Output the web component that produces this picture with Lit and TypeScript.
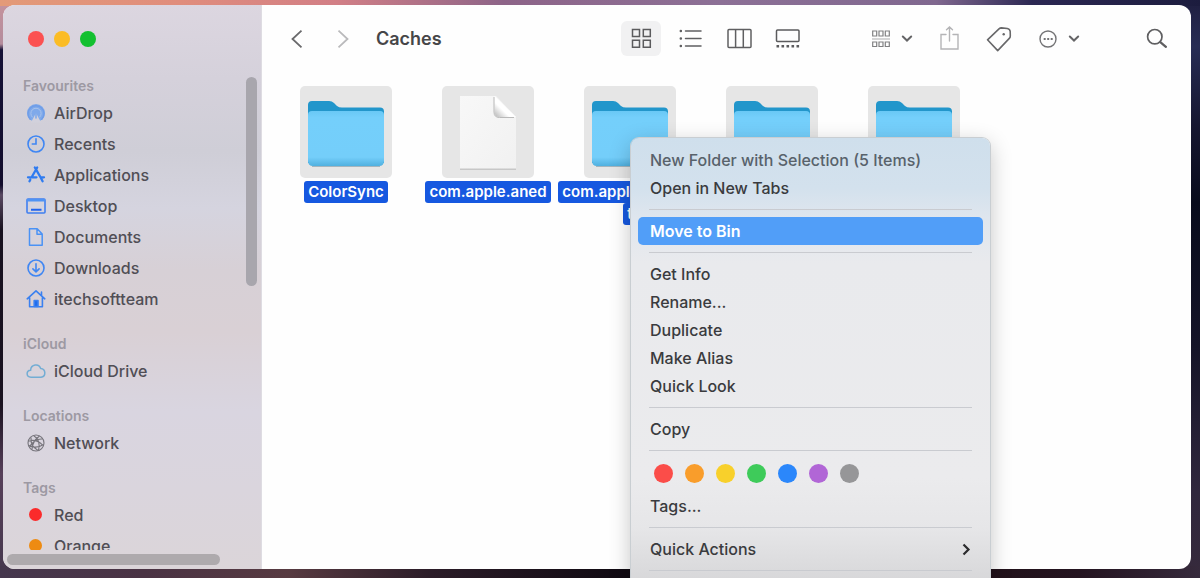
import { LitElement, html, css, svg, nothing } from "lit";
import { customElement, property } from "lit/decorators.js";

const icons: Record<string, unknown> = {
  airdrop: svg`<g fill="none" stroke="#6b9dea" stroke-linecap="round"><circle cx="10" cy="10" r="9" fill="#7fa9ea" stroke="none"/><path d="M4.2 16.2a8 8 0 1 1 11.6 0" stroke="#6f9de8" stroke-width="1.4"/><path d="M6.2 14a5.2 5.2 0 1 1 7.600 0" stroke="#a9c3ec" stroke-width="1"/><path d="M10 10 5 19.500h10z" fill="#d2d1dc" stroke="none"/><path d="M10 10v5" stroke="#7fa9ea" stroke-width="1.600"/></g>`,
  recents: svg`<g fill="none" stroke="#3f86f3" stroke-width="1.6" stroke-linecap="round"><circle cx="10" cy="10" r="8"/><path d="M10 4.800V10H6.300"/></g>`,
  apps: svg`<g fill="none" stroke="#2f7bf0" stroke-width="2.300" stroke-linecap="round"><path d="M8.800 2.500 10 4.400 14.500 12.200 16.600 16.300M11.200 2.500 5.600 12.300M4.300 14.800 3.500 16.300M2 12.300h8.500M14.500 12.300H18"/></g>`,
  desktop: svg`<g fill="none" stroke="#3f7ff0" stroke-width="1.600"><rect x="1" y="3" width="18" height="14" rx="1"/><path d="M1 4.200h18" stroke="#4f93f4" stroke-width="2.600"/><path d="M5 13.700h10.500" stroke="#1f63ee" stroke-width="2"/></g>`,
  document: svg`<g fill="none" stroke="#4a92f5" stroke-width="1.500" stroke-linejoin="round"><path d="M3.500 1.800h7.700l5 5.200v11.200H3.500zM11 2v5.200h5"/></g>`,
  downloads: svg`<g fill="none" stroke="#3f86f3" stroke-width="1.600" stroke-linecap="round" stroke-linejoin="round"><circle cx="10" cy="10" r="8"/><path d="M10 5.700v8M6.900 10.900 10 13.900l3.100-3"/></g>`,
  home: svg`<g fill="none" stroke="#3a80f0" stroke-width="1.600" stroke-linecap="round" stroke-linejoin="round"><path d="M1.200 9.800 10 1.800l8.800 8M15.500 6.500V3M3.600 8.500v9.300h12.800V8.500"/><path d="M8.200 17.500v-6h3.800v6z" fill="#1f6cee"/></g>`,
  cloud: svg`<path d="M5 16.200c-5.200-.2-5-6.700-.4-7 .4-6 8.200-7.200 10.100-1.800 5.300.4 5.600 8.500.3 8.800z" fill="none" stroke="#73add4" stroke-width="1.500"/>`,
  network: svg`<g fill="none" stroke="#76747b" stroke-width="1.100"><circle cx="10" cy="10" r="8"/><path d="M2.500 8c5-1.500 10-.5 14.500 4.500M7.500 2.500c5 3 6.500 9 5 15M3.500 14.500c2-5 7-9 13-8.500M5 4.500c-.5 5 2 10 7 13M13.500 3c-4 3-7.500 8-7.500 13.500M3 12.500c5 2.500 10 2 14.500-1"/></g>`,
  grid: svg`<g fill="none" stroke="#5b5b5d" stroke-width="1.500"><path d="M1.500 1.500h7v7h-7zM12.300 1.500h7v7h-7zM1.500 12.300h7v7h-7zM12.300 12.300h7v7h-7z"/></g>`,
  list: svg`<g stroke="#5f5f61" stroke-width="1.500" stroke-linecap="round"><path d="M6.500 3H22M6.500 10.500H22M6.500 18H22"/><path d="M1.800 3h.1M1.800 10.500h.1M1.800 18h.1" stroke-width="2.500"/></g>`,
  columns: svg`<g fill="none" stroke="#5f5f61" stroke-width="1.500"><rect x="1" y="1.500" width="23" height="18" rx="1"/><path d="M8.600 1.500v18M16.300 1.500v18"/></g>`,
  gallery: svg`<g fill="none" stroke="#5b5b5d" stroke-width="1.500"><rect x="1.500" y="2" width="22.500" height="11.500" rx="1"/><path d="M1.500 18.300h23" stroke-width="2.600" stroke-dasharray="2.600 2.400"/></g>`,
  group: svg`<g fill="none" stroke="#808082" stroke-width="1.200"><path d="M1.700 2h4v5h-4zM8 2h4v5H8zM14.300 2h4v5h-4zM1.700 13h4v4.500h-4zM8 13h4v4.500H8zM14.300 13h4v4.500h-4z"/><path d="M1 10h18" stroke="#a9a9ab"/></g>`,
  caret: svg`<path d="M1.800 3.500 6 7.500l4.200-4" fill="none" stroke="#656567" stroke-width="2" stroke-linecap="round"/>`,
  share: svg`<g fill="none" stroke="#b4b4b6" stroke-width="1.400" stroke-linecap="round"><path d="M7 8.500H2V23h17V8.500h-5M10.500 15V1M7.500 3.800l3-2.800 3 2.800"/></g>`,
  tag: svg`<g fill="none" stroke="#68686a" stroke-width="1.600" stroke-linejoin="round"><path d="M1.500 13.800 13 2.800q1-.9 2.500-.9l5.800.6q2.600.4 2.900 3l.1 4.400q0 1.500-1 2.500L11.700 24.600z"/><circle cx="17.700" cy="8.300" r="1.200" fill="#68686a" stroke="none"/></g>`,
  more: svg`<g fill="none" stroke="#747476" stroke-width="1.400"><circle cx="10" cy="10" r="8"/><path d="M5.700 10h9" stroke-width="2" stroke-dasharray="2 1.500"/></g>`,
  search: svg`<g fill="none" stroke="#5f5f61" stroke-width="1.700" stroke-linecap="round"><circle cx="8.800" cy="8.700" r="7.200"/><path d="m14.300 14.200 5.600 4.600" stroke-width="2.300"/></g>`,
  back: svg`<path d="M11.500 1.700 2.500 10l9 8.300" fill="none" stroke="#6a6a6c" stroke-width="1.800"/>`,
  forward: svg`<path d="m2.500 1.700 9 8.300-9 8.300" fill="none" stroke="#bababc" stroke-width="1.800"/>`,
  submenu: svg`<path d="m2.500 1.500 5 5-5 5" fill="none" stroke="#2b2b2d" stroke-width="2.200"/>`,
};

const icon = (name: string, w: number, h: number) =>
  html`<svg width=${w} height=${h} viewBox="0 0 ${w} ${h}" aria-hidden="true">${icons[name]}</svg>`;

const places = [
  { title: "Favourites", items: [["airdrop", "AirDrop"], ["recents", "Recents"], ["apps", "Applications"], ["desktop", "Desktop"], ["document", "Documents"], ["downloads", "Downloads"], ["home", "itechsoftteam"]] },
  { title: "iCloud", items: [["cloud", "iCloud Drive"]] },
  { title: "Locations", items: [["network", "Network"]] },
  { title: "Tags", items: [["red", "Red"], ["orange", "Orange"]] },
];

@customElement("finder-sidebar")
class FinderSidebar extends LitElement {
  static styles = css`
    :host { display: flex; flex-direction: column; box-sizing: border-box; min-height: 0; position: relative;
      border-right: 1px solid #dedce2;
      background: linear-gradient(180deg, #dcd6e0 0, #d5d1db 13%, #cfced7 26%, #d5d4df 36%, #d7d0d6 47%, #d9d0d5 58%, #d9d5e0 72%, #dad5dd 86%, #dbd5d9 100%); }
    .lights { display: flex; gap: 10px; padding: 26px 25px 28px; }
    .light { width: 16px; height: 16px; padding: 0; border: 0; border-radius: 50%; }
    .close { background: #fb5151; }
    .minimise { background: #fbbc25; }
    .zoom { background: #13c030; }
    .list { flex: 1; min-height: 0; overflow: hidden; display: flex; flex-direction: column; gap: 19px; margin: 0 0 19px; }
    .title { margin: 0; padding-left: 20px; font-size: 14px; line-height: 22px; font-weight: 600; color: #9d99a3; }
    .item { display: flex; align-items: center; gap: 8px; height: 31px; padding-left: 23px; font-size: 16px; line-height: 24px; font-weight: 500; color: #504e55; text-decoration: none; }
    .dot { width: 13px; height: 13px; margin: 0 4px 0 3px; border-radius: 50%; }
    .red { background: #fb2b2b; }
    .orange { background: #ee8b12; }
    .vbar { position: absolute; right: 4px; top: 72px; width: 11px; height: 209px; border-radius: 6px; background: #a8a6ad; }
    .hbar { position: absolute; left: 4px; bottom: 4px; width: 213px; height: 11px; border-radius: 6px; background: #aeaaad; }
  `;
  render() {
    return html`
      <div class="lights">
        <button class="light close" aria-label="Close"></button>
        <button class="light minimise" aria-label="Minimise"></button>
        <button class="light zoom" aria-label="Zoom"></button>
      </div>
      <nav class="list">
        ${places.map((p) => html`<section>
          <h2 class="title">${p.title}</h2>
          ${p.items.map(([k, label]) => html`<a class="item" href="#">
            ${p.title === "Tags" ? html`<span class="dot ${k}"></span>` : icon(k, 20, 20)}<span>${label}</span></a>`)}
        </section>`)}
      </nav>
      <div class="vbar"></div>
      <div class="hbar"></div>`;
  }
}

@customElement("finder-toolbar")
class FinderToolbar extends LitElement {
  static styles = css`
    :host { display: flex; align-items: center; height: 67px; padding: 0 24px 0 28px; }
    button { display: flex; align-items: center; justify-content: center; gap: 10px; padding: 0; border: 0; background: none; border-radius: 6px; }
    .history { display: flex; gap: 32px; }
    .title { margin: 0 0 0 26px; font-size: 18px; line-height: 24px; font-weight: 600; color: #464648; }
    .views { display: flex; gap: 9px; margin-left: auto; }
    .view { width: 40px; height: 35px; }
    .active { background: #f1f1f2; }
    .actions { display: flex; align-items: center; gap: 26px; margin: 0 66px 0 63px; }
  `;
  render() {
    return html`
      <div class="history">
        <button aria-label="Back">${icon("back", 14, 20)}</button>
        <button aria-label="Forward">${icon("forward", 14, 20)}</button>
      </div>
      <h1 class="title">Caches</h1>
      <div class="views">
        <button class="view active" aria-label="Icons">${icon("grid", 21, 21)}</button>
        <button class="view" aria-label="List">${icon("list", 23, 21)}</button>
        <button class="view" aria-label="Columns">${icon("columns", 25, 21)}</button>
        <button class="view" aria-label="Gallery">${icon("gallery", 26, 21)}</button>
      </div>
      <div class="actions">
        <button aria-label="Group">${icon("group", 20, 20)}${icon("caret", 12, 11)}</button>
        <button aria-label="Share">${icon("share", 21, 26)}</button>
        <button aria-label="Edit tags">${icon("tag", 26, 26)}</button>
        <button aria-label="More">${icon("more", 20, 20)}${icon("caret", 12, 11)}</button>
      </div>
      <button aria-label="Search">${icon("search", 21, 21)}</button>`;
  }
}

@customElement("finder-file")
class FinderFile extends LitElement {
  @property() kind = "folder";
  @property({ attribute: false }) lines: string[] = [];
  static styles = css`
    :host { display: flex; flex-direction: column; align-items: center; gap: 3px; }
    .tile { width: 92px; height: 92px; border-radius: 5px; background: #e6e6e6; }
    .name { display: flex; flex-direction: column; align-items: center; }
    .line { padding: 0 4px; border-radius: 3px; background: #1658e0; color: #fff; font-size: 15px; line-height: 22px; font-weight: 600; white-space: nowrap; }
  `;
  render() {
    const art = this.kind === "folder"
      ? svg`<defs><linearGradient id="f" x2="0" y2="1"><stop offset="0" stop-color="#69c8f5"/><stop offset=".12" stop-color="#74cffb"/><stop offset=".84" stop-color="#74cefa"/><stop offset="1" stop-color="#50b0df"/></linearGradient></defs>
        <path d="M8 77V19q0-4 4-4h17q3 0 5 2l3 3q2 1.500 5 1.500h38q4 0 4 4V77z" fill="#2296cb"/>
        <path d="M8 29q0-4 4-4h68q4 0 4 4v46q0 5-5 5H13q-5 0-5-5z" fill="url(#f)"/><path d="M12 80.500h68" stroke="#a5b5bd"/>`
      : svg`<defs><linearGradient id="d" x2="1" y2="1"><stop offset="0" stop-color="#f8f8f8"/><stop offset="1" stop-color="#f1f1f1"/></linearGradient><linearGradient id="c" x1="0" y1="1" x2=".6" y2=".4"><stop offset="0" stop-color="#b5b5b5"/><stop offset=".6" stop-color="#fff"/></linearGradient></defs>
        <path d="M18 83h56" stroke="#bcbcbc" stroke-width="1.500"/><path d="M18 10h36l20 21v51.500H18z" fill="url(#d)"/>
        <path d="M52.500 10v16q0 5 5 5H74z" fill="url(#c)"/><path d="M52 11v15q0 5.500 5.500 5.500H72" fill="none" stroke="#b9b9b9"/>`;
    return html`<svg class="tile" viewBox="0 0 92 92" aria-hidden="true">${art}</svg>
      ${this.lines.length ? html`<div class="name">${this.lines.map((l) => html`<span class="line">${l}</span>`)}</div>` : nothing}`;
  }
}

const tagColours = [["Red", "#fb4d49"], ["Orange", "#f99d2b"], ["Yellow", "#f8d02b"], ["Green", "#3ecb5a"], ["Blue", "#2b87fb"], ["Purple", "#b166d6"], ["Grey", "#969698"]];

@customElement("context-menu")
class ContextMenu extends LitElement {
  static styles = css`
    :host { display: block; box-sizing: border-box; padding: 8px 7px; border: 0 solid; border-radius: 8px;
      background: linear-gradient(180deg, #cfdfec 0, #d3e1ed 50px, #dfe6ee 80px, #e9eaed 125px, #ebebed 340px, #e6e6e8 390px, #d8d8da 440px);
      box-shadow: 0 0 0 1px #c9ced2, 0 6px 22px rgba(0, 0, 0, .24); }
    .item { display: flex; align-items: center; justify-content: space-between; width: 100%; height: 28px; padding: 0 12px; border: 0; border-radius: 5px; background: none; color: #3a3b3e; font: 500 16px/24px Inter, "Liberation Sans", sans-serif; text-align: left; }
    .muted { color: #58626b; }
    .selected { background: #519ef8; color: #fff; font-weight: 600; }
    .rule { height: 1px; margin: 7px 11px; border: 0; background: #c9cbd0; }
    .tags { display: flex; align-items: center; gap: 12px; box-sizing: border-box; height: 34px; padding: 0 16px 4px; }
    .tag { width: 19px; height: 19px; padding: 0; border: 0; border-radius: 50%; }
  `;
  private row(label: string, cls = "", sub = false) {
    return html`<button class="item ${cls}" role="menuitem"><span>${label}</span>${sub ? icon("submenu", 10, 13) : nothing}</button>`;
  }
  render() {
    return html`
      ${this.row("New Folder with Selection (5 Items)", "muted")}${this.row("Open in New Tabs")}
      <hr class="rule">
      ${this.row("Move to Bin", "selected")}
      <hr class="rule">
      ${["Get Info", "Rename...", "Duplicate", "Make Alias", "Quick Look"].map((l) => this.row(l))}
      <hr class="rule">
      ${this.row("Copy")}
      <hr class="rule">
      <div class="tags">${tagColours.map(([n, c]) => html`<button class="tag" aria-label=${n} style="background:${c}"></button>`)}</div>
      ${this.row("Tags...")}
      <hr class="rule">
      ${this.row("Quick Actions", "", true)}
      <hr class="rule">`;
  }
}

@customElement("app-root")
class AppRoot extends LitElement {
  static styles = css`
    :host { display: block; box-sizing: border-box; position: relative; height: 100vh; overflow: hidden; padding: 5px 9px 9px 3px;
      font-family: Inter, "Liberation Sans", sans-serif;
      background:
        linear-gradient(90deg, #e39a78 0, #e08d7c 15%, #d27f86 28%, #8d6488 42%, #8c7096 60%, #80688f 78%, #2c2853 86%, #1c1c3e 100%) top / 100% 6px no-repeat,
        linear-gradient(90deg, #45374d 0, #4a3344 12%, #573a41 24%, #2b1c28 36%, #100a12 52%, #1f1015 76%, #241420 90%, #362a3c 100%) bottom / 100% 12px no-repeat,
        linear-gradient(180deg, #c6939d 0, #b48c9c 44px, #151136 50px, #120d2c 185px, #5a4a63 195px, #17111f 230px, #1a1220 70%, #57405a 82%, #45374d 100%) left / 50% 100% no-repeat,
        linear-gradient(180deg, #1f1e40 0, #272c54 8%, #161630 22%, #080b1c 35%, #151428 60%, #30273d 85%, #362a3c 100%); }
    .window { display: grid; grid-template-columns: 259px minmax(0, 1fr); grid-template-rows: minmax(0, 1fr); height: 100%; border-radius: 12px; overflow: hidden; background: #fefefe; }
    .files { display: grid; grid-template-columns: repeat(auto-fill, 142px); padding: 14px 13px; }
    .menu { position: absolute; left: 631px; top: 138px; width: 359px; }
  `;
  render() {
    return html`
      <div class="window">
        <finder-sidebar></finder-sidebar>
        <main>
          <finder-toolbar></finder-toolbar>
          <div class="files">
            <finder-file .lines=${["ColorSync"]}></finder-file>
            <finder-file kind="document" .lines=${["com.apple.aned"]}></finder-file>
            <finder-file .lines=${["com.apple.metada", "t"]}></finder-file>
            <finder-file></finder-file>
            <finder-file></finder-file>
          </div>
        </main>
      </div>
      <context-menu class="menu" role="menu"></context-menu>`;
  }
}
